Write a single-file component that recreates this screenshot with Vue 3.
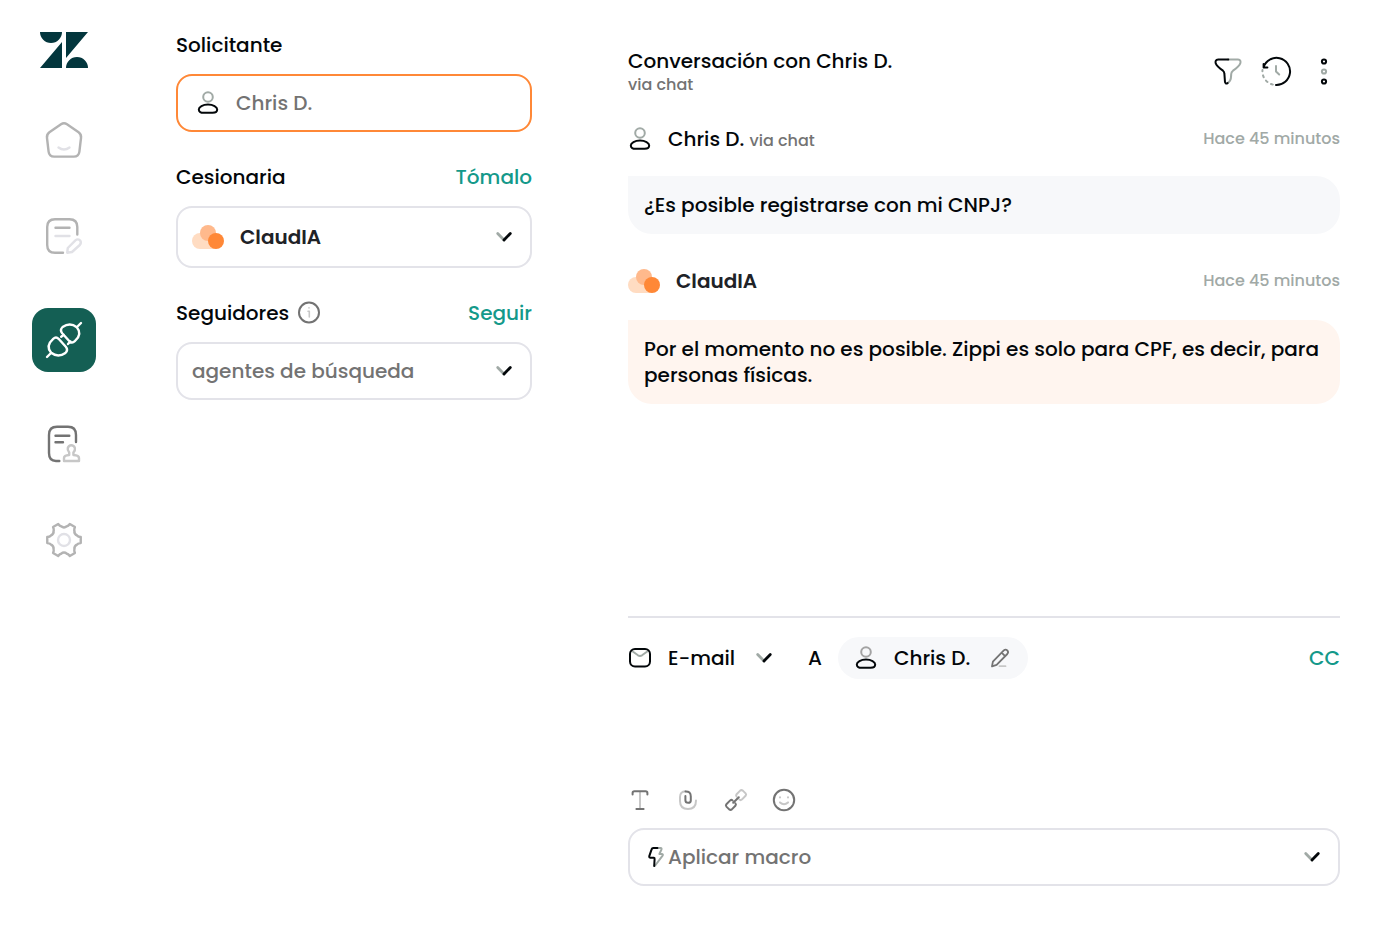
<template>
  <div class="app">
    <aside class="sidebar">
      <svg class="logo" width="48" height="36" viewBox="0 0 48 36" role="img" aria-label="Zendesk">
        <path d="M0 0H22A11 11 0 0 1 0 0ZM22 10V36H0ZM26 0H48L26 26ZM26 36A11 11 0 0 1 48 36Z" />
      </svg>
      <nav class="nav">
        <button
          v-for="item in nav"
          :key="item.id"
          type="button"
          class="nav-item"
          :class="{ active: item.id === current }"
          :aria-label="item.label"
          @click="current = item.id"
        >
          <svg class="icon" width="48" height="48" viewBox="0 0 48 48">
            <path
              v-for="(p, i) in item.paths"
              :key="i"
              :d="p.d"
              :class="p.tone"
            />
          </svg>
        </button>
      </nav>
    </aside>

    <section class="panel details">
      <div class="field">
        <div class="field-head">
          <label for="requester">Solicitante</label>
        </div>
        <div class="box focus">
          <svg class="icon user" width="24" height="24" viewBox="0 0 24 24">
            <circle class="soft" cx="12" cy="6" r="4.8" />
            <path class="dark" :d="shapes.shoulders" />
          </svg>
          <input id="requester" v-model="requester" type="text" />
        </div>
      </div>

      <div class="field">
        <div class="field-head">
          <label for="assignee">Cesionaria</label>
          <a href="#">Tómalo</a>
        </div>
        <div class="box tall">
          <svg class="cloud" width="32" height="24" viewBox="0 0 32 24">
            <path class="c1" :d="shapes.cloud" />
            <circle class="c2" cx="16" cy="8" r="8" />
            <circle class="c3" cx="24" cy="16" r="8" />
          </svg>
          <select id="assignee" class="bot-name">
            <option>ClaudIA</option>
          </select>
          <svg class="icon chevron" width="24" height="24" viewBox="0 0 24 24">
            <path class="soft" d="M5.7 8.5L12 15" />
            <path class="dark" d="M12 15L18.3 8.5" />
          </svg>
        </div>
      </div>

      <div class="field">
        <div class="field-head">
          <label for="followers">Seguidores</label>
          <svg class="icon info" width="24" height="24" viewBox="0 0 24 24">
            <circle class="mid" cx="12" cy="11.5" r="10" />
            <path class="light" d="M11 10.2H12.3V16M12 6.8V7" />
          </svg>
          <a href="#">Seguir</a>
        </div>
        <div class="box">
          <select id="followers" class="muted">
            <option>agentes de búsqueda</option>
          </select>
          <svg class="icon chevron" width="24" height="24" viewBox="0 0 24 24">
            <path class="soft" d="M5.7 8.5L12 15" />
            <path class="dark" d="M12 15L18.3 8.5" />
          </svg>
        </div>
      </div>
    </section>

    <main class="panel conversation">
      <header class="head">
        <div class="head-text">
          <h1>Conversación con Chris D.</h1>
          <p class="via">via chat</p>
        </div>
        <div class="head-actions">
          <button type="button" aria-label="Filtrar">
            <svg class="icon" width="32" height="32" viewBox="0 0 32 32">
              <path class="soft" d="M16 3.5H26Q29.5 3.8 28.2 7.7Q26.8 10.8 21 14.7Q19.3 16 19.2 18Q19.2 23 17.8 25L15.8 26.9" />
              <path class="dark" d="M16.3 3.5H6.2Q2.6 3.8 3.8 7.7Q5.2 10.8 11 14.7Q12.4 15.7 12.4 17.9L13 26.1Q13.6 28.3 15.6 27.1" />
            </svg>
          </button>
          <button type="button" aria-label="Historial">
            <svg class="icon" width="32" height="32" viewBox="0 0 32 32">
              <path class="soft" d="M16 10V15.5L19.2 18.5" />
              <path class="soft dashed" d="M12.8 28.6A13.6 13.6 0 0 1 2.5 14" />
              <path class="dark" d="M16 29A13.6 13.6 0 1 0 3.6 11M3.6 8V11.4H7.4" />
            </svg>
          </button>
          <button type="button" aria-label="Más opciones">
            <svg class="icon" width="32" height="32" viewBox="0 0 32 32">
              <circle class="dark" cx="16" cy="5.5" r="2.1" />
              <circle class="soft" cx="16" cy="15.5" r="2.1" />
              <circle class="dark" cx="16" cy="25.5" r="2.1" />
            </svg>
          </button>
        </div>
      </header>

      <article v-for="m in messages" :key="m.id" class="message" :class="{ bot: m.bot }">
        <div class="message-head">
          <svg v-if="m.bot" class="cloud" width="32" height="24" viewBox="0 0 32 24">
            <path class="c1" :d="shapes.cloud" />
            <circle class="c2" cx="16" cy="8" r="8" />
            <circle class="c3" cx="24" cy="16" r="8" />
          </svg>
          <svg v-else class="icon user" width="24" height="24" viewBox="0 0 24 24">
            <circle class="soft" cx="12" cy="6" r="4.8" />
            <path class="dark" :d="shapes.shoulders" />
          </svg>
          <span class="author">{{ m.author }} <small v-if="m.via">{{ m.via }}</small></span>
          <time>{{ m.time }}</time>
        </div>
        <p class="bubble">{{ m.text }}</p>
      </article>

      <form class="composer" @submit.prevent>
        <div class="channel-row">
          <svg class="icon" width="24" height="24" viewBox="0 0 24 24">
            <path class="soft" d="M4 5L10 9.3Q12 10.6 14 9.3L20 5" />
            <rect class="dark" x="2" y="3" width="20" height="17.6" rx="5" />
          </svg>
          <div class="channel">
            <select aria-label="Canal">
              <option>E-mail</option>
            </select>
            <svg class="icon chevron" width="24" height="24" viewBox="0 0 24 24">
              <path class="soft" d="M5.7 8.5L12 15" />
              <path class="dark" d="M12 15L18.3 8.5" />
            </svg>
          </div>
          <span class="to">A</span>
          <button type="button" class="chip">
            <svg class="icon user" width="24" height="24" viewBox="0 0 24 24">
              <circle class="gray" cx="12" cy="6" r="4.8" />
              <path class="dark" :d="shapes.shoulders" />
            </svg>
            <span>Chris D.</span>
            <svg class="icon edit" width="24" height="24" viewBox="0 0 24 24">
              <path class="pale" d="M11.5 20.2H17.5" />
              <path class="mid" d="M4 20.4L4.9 15.6L15.8 4.4Q17.6 2.8 19.3 4.4Q20.9 6.2 19.3 8L8.6 18.8ZM14.6 7.6L16.6 9.6" />
            </svg>
          </button>
          <a href="#" class="cc">CC</a>
        </div>
        <textarea aria-label="Respuesta"></textarea>
        <div class="tools">
          <button v-for="t in tools" :key="t.label" type="button" :aria-label="t.label">
            <svg class="icon" width="24" height="24" viewBox="0 0 24 24">
              <path v-for="(p, i) in t.paths" :key="i" :d="p.d" :class="p.tone" />
            </svg>
          </button>
        </div>
        <div class="box macro">
          <svg class="icon" width="24" height="24" viewBox="0 0 24 24">
            <path class="soft" d="M13 3H16.6Q18 3.2 17.4 4.6L15.4 9H18Q19.4 9.3 18.6 10.6L10.8 21" />
            <path class="dark" d="M13.4 3H9.4Q8 3.1 7.6 4.4L5.2 11.4Q5.1 12.7 6.2 12.8H9.8Q10.8 13 10.6 14L10.2 21" />
          </svg>
          <select class="muted" aria-label="Macro">
            <option>Aplicar macro</option>
          </select>
          <svg class="icon chevron" width="24" height="24" viewBox="0 0 24 24">
            <path class="soft" d="M5.7 8.5L12 15" />
            <path class="dark" d="M12 15L18.3 8.5" />
          </svg>
        </div>
      </form>
    </main>
  </div>
</template>

<script setup>
import { ref } from "vue"

const current = ref("tickets")
const requester = ref("Chris D.")

const shapes = {
  shoulders:
    "M12 13.6C17.2 13.6 21.2 15.9 21.2 18.6C21.2 20.8 19 21.8 16.6 21.8H7.4C5 21.8 2.8 20.8 2.8 18.6C2.8 15.9 6.8 13.6 12 13.6Z",
  cloud: "M8 8H24V24H8A8 8 0 0 1 8 8Z",
}

// six-tooth cog around 24,24
function cog() {
  const at = (deg, r) => {
    const a = (deg * Math.PI) / 180
    return `${(24 + r * Math.cos(a)).toFixed(2)} ${(24 + r * Math.sin(a)).toFixed(2)}`
  }
  let d = `M${at(-10, 17)}`
  for (let a = 0; a < 360; a += 60) {
    d += `L${at(a + 10, 17)}Q${at(a + 13, 14.5)} ${at(a + 18, 14)}`
    d += `Q${at(a + 30, 11.5)} ${at(a + 42, 14)}Q${at(a + 47, 14.5)} ${at(a + 50, 17)}`
  }
  return d + "Z"
}

const nav = [
  {
    id: "home",
    label: "Inicio",
    paths: [
      { tone: "light", d: "M18.5 31.5Q24 35.6 29.5 31.5" },
      { tone: "faded", d: "M21 8.2Q24 6.2 27 8.2L38.6 16.2Q41.6 18.4 41 22L39.4 35.6Q38.8 40.6 33.8 40.6H14.2Q9.2 40.6 8.6 35.6L7 22Q6.4 18.4 9.4 16.2Z" },
    ],
  },
  {
    id: "notes",
    label: "Notas",
    paths: [
      { tone: "faded", d: "M37.3 22.5V15Q37.3 7.2 29.5 7.2H15Q7.2 7.2 7.2 15V33Q7.2 40.8 15 40.8H23M15.5 15.7H29.5" },
      { tone: "light", d: "M15.5 24H29.5M27.2 40.7L27.8 36L35.4 28.4Q37.8 26.4 40 28.3Q41.8 30.6 39.8 33L32 40Z" },
    ],
  },
  {
    id: "tickets",
    label: "Integraciones",
    paths: [
      { tone: "white", d: "M13.2 22.8Q16 20.3 18.6 22.8L25.8 30.8Q28.5 34 25.4 37Q18 42.2 11.2 36.8Q5.2 29.8 13.2 22.8ZM11 37L7 41" },
      { tone: "white", d: "M34.8 25.2Q32 27.7 29.4 25.2L22.2 17.2Q19.5 14 22.6 11Q30 5.8 36.8 11.2Q42.8 18.2 34.8 25.2ZM37 11L41 7M23.8 18.8L21.2 20.8M30.4 25.4L28 28" },
    ],
  },
  {
    id: "approvals",
    label: "Aprobaciones",
    paths: [
      { tone: "mid", d: "M36 22V15Q36 6.8 28 6.8H17Q9 6.8 9 15V33Q9 41 16 41H19.3M15.5 15.7H29.3M15.5 22.3H23" },
      { tone: "pale", d: "M29.2 35V32.6Q27.2 30 27.8 28Q28.8 25.2 31.2 25.2Q34 25.2 34.9 28Q35.4 30.2 33.4 32.6V35Q39 35.4 39 38V41H24V38Q24 35.4 29.2 35Z" },
    ],
  },
  {
    id: "settings",
    label: "Ajustes",
    paths: [
      { tone: "light", d: "M30 24A6 6 0 1 1 18 24A6 6 0 1 1 30 24Z" },
      { tone: "faded", d: cog() },
    ],
  },
]

const messages = [
  {
    id: 1,
    author: "Chris D.",
    via: "via chat",
    time: "Hace 45 minutos",
    text: "¿Es posible registrarse con mi CNPJ?",
  },
  {
    id: 2,
    bot: true,
    author: "ClaudIA",
    time: "Hace 45 minutos",
    text: "Por el momento no es posible. Zippi es solo para CPF, es decir, para personas físicas.",
  },
]

const tools = [
  {
    label: "Texto",
    paths: [
      { tone: "pale", d: "M12 4V20" },
      { tone: "mid", d: "M4.6 6.4V5Q4.6 3.2 6.4 3.2H17.6Q19.4 3.2 19.4 5V6.4M8.4 21H15.6" },
    ],
  },
  {
    label: "Adjuntar",
    paths: [
      { tone: "pale", d: "M9.5 3.2Q4 3.6 4 9V13Q4 21 12 21Q20 21 20 12.5" },
      { tone: "mid", d: "M9.5 3.4Q14.8 3.2 14.8 8.5V12.4Q14.8 14.8 12.2 14.8Q9.4 14.8 9.4 12.2V8" },
    ],
  },
  {
    label: "Enlace",
    paths: [
      { tone: "pale", d: "M15.4 11.6Q16.6 12.6 17.8 11.6L21.6 7.8Q22.6 6.6 21.6 5.4L18.8 2.6Q17.4 1.6 16.2 2.6L12.6 6.2Q11.6 7.4 12.6 8.6" },
      { tone: "mid", d: "M8.6 12.4Q7.4 11.4 6.2 12.4L2.4 16.2Q1.4 17.4 2.4 18.6L5.2 21.4Q6.6 22.4 7.8 21.4L11.4 17.8Q12.4 16.6 11.4 15.4M9.2 14.8L14.8 9.2" },
    ],
  },
  {
    label: "Emoji",
    paths: [
      { tone: "pale", d: "M8 14.4Q12 18 16 14.4M8 9.2V9.4M16 9.2V9.4" },
      { tone: "mid", d: "M22.2 12A10.2 10.2 0 1 1 1.8 12A10.2 10.2 0 1 1 22.2 12Z" },
    ],
  },
]
</script>

<style>
body {
  margin: 0;
  background: #fff;
}
</style>

<style scoped>
.app {
  display: flex;
  align-items: flex-start;
  gap: 16px;
  min-height: 100vh;
  color: #03070a;
  font-family: Poppins, Inter, "Liberation Sans", sans-serif;
  font-size: 20px;
  font-weight: 500;
  line-height: 26px;
}
.app *,
.app {
  box-sizing: border-box;
}
button,
input,
select,
textarea {
  margin: 0;
  padding: 0;
  border: 0;
  outline: 0;
  background: none;
  color: inherit;
  font: inherit;
}
select {
  appearance: none;
}
button {
  display: flex;
  align-items: center;
  justify-content: center;
  cursor: pointer;
}
a {
  color: #14998a;
  text-decoration: none;
}
h1,
p {
  margin: 0;
  font-size: 20px;
  font-weight: 500;
}

/* icons */
svg {
  display: block;
  flex: none;
}
.icon {
  fill: none;
  stroke-width: 2;
  stroke-linecap: round;
  stroke-linejoin: round;
}
.dark {
  stroke: #03070a;
}
.soft {
  stroke: #a1aaa6;
}
.gray {
  stroke: #a3a3a3;
}
.mid {
  stroke: #737373;
}
.faded {
  stroke: #b3b3b3;
}
.pale {
  stroke: #c7c7c7;
}
.light {
  stroke: #e1e1e6;
}
.info .light {
  stroke: #c7c7c7;
  stroke-width: 1.6;
}
.edit {
  stroke-width: 1.8;
}
.white {
  stroke: #fff;
}
.dashed {
  stroke-dasharray: 2 4;
}
.logo {
  fill: #03363d;
}
.c1 {
  fill: #ffdcc2;
}
.c2 {
  fill: #ffb98c;
}
.c3 {
  fill: #ff8837;
}

/* sidebar */
.sidebar {
  display: flex;
  flex: 0 0 128px;
  flex-direction: column;
  align-items: center;
  gap: 48px;
  padding: 32px 0;
}
.nav {
  display: flex;
  flex-direction: column;
  align-items: center;
  gap: 48px;
}
.nav-item {
  width: 64px;
  height: 48px;
}
.nav-item .icon {
  stroke-width: 2.4;
}
.nav-item.active {
  height: 64px;
  border-radius: 16px;
  background: #145f54;
}

/* ticket details */
.panel {
  border-radius: 32px;
  background: #fff;
}
.details {
  display: flex;
  flex: 0 0 420px;
  flex-direction: column;
  gap: 32px;
  min-width: 0;
  padding: 32px;
}
.field-head {
  display: flex;
  align-items: center;
  gap: 8px;
  margin-bottom: 16px;
}
.field-head a {
  margin-left: auto;
}
.box {
  position: relative;
  display: flex;
  align-items: center;
  gap: 16px;
  height: 58px;
  padding: 0 14px;
  border: 2px solid #e3e3e9;
  border-radius: 16px;
}
.box.tall {
  height: 62px;
}
.box.focus {
  padding: 0 18px;
  border-color: #ff8837;
}
.box input,
.box select {
  flex: 1;
  min-width: 0;
  height: 100%;
}
.box input,
.muted {
  color: #737373;
}
.chevron {
  position: absolute;
  right: 14px;
  stroke-width: 2.8;
  pointer-events: none;
}
.bot-name,
.bot .author {
  color: #202227;
  font-weight: 600;
}

/* conversation */
.conversation {
  display: flex;
  flex: 1;
  flex-direction: column;
  min-width: 0;
  min-height: 100vh;
  padding: 48px;
}
.head {
  display: flex;
  align-items: center;
  justify-content: space-between;
  margin-bottom: 30px;
}
.head-actions {
  display: flex;
  gap: 16px;
}
.via,
small {
  color: #737373;
  font-size: 16px;
  line-height: 22px;
}
.message {
  margin-bottom: 32px;
}
.message-head {
  display: flex;
  align-items: center;
  gap: 16px;
  margin-bottom: 24px;
}
.bot .message-head {
  min-height: 30px;
}
time {
  margin-left: auto;
  color: #a1a9a6;
  font-size: 16px;
}
.bubble {
  padding: 16px;
  border-radius: 0 24px 24px 24px;
  background: #f7f8fa;
}
.bot .bubble {
  background: #fff5ef;
}

/* composer */
.composer {
  margin-top: auto;
  border-top: 2px solid #e3e3e9;
}
.channel-row {
  display: flex;
  align-items: center;
  gap: 16px;
  height: 80px;
}
.channel {
  position: relative;
  display: flex;
  align-items: center;
}
.channel select {
  padding-right: 40px;
}
.channel .chevron {
  right: 0;
}
.to {
  margin-left: 16px;
}
.chip {
  gap: 16px;
  min-width: 190px;
  height: 42px;
  padding: 0 16px;
  border-radius: 24px;
  background: #f7f8fa;
}
.chip .edit {
  margin-left: auto;
}
.cc {
  margin-left: auto;
}
textarea {
  display: block;
  width: 100%;
  height: 90px;
  resize: none;
}
.tools {
  display: flex;
  gap: 24px;
  margin-bottom: 16px;
}
.macro {
  gap: 0;
}
</style>
